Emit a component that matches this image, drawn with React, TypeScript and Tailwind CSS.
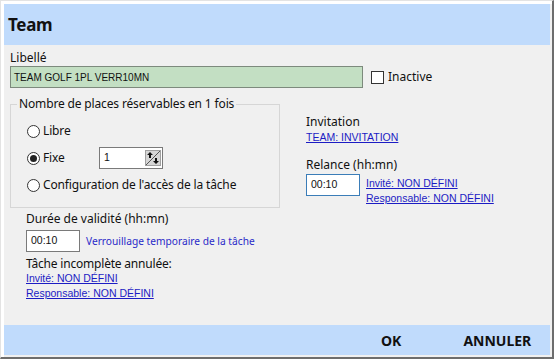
import React from 'react';

const segoe = { fontFamily: '"Noto Sans", "Open Sans", sans-serif' };
const tahoma = { fontFamily: '"Liberation Sans", Arial, sans-serif' };

function Radio({ checked, label }: { checked?: boolean; label: string }) {
  return (
    <div className="flex items-center h-[22px]">
      <span className="w-[13px] h-[13px] rounded-full border border-[#333] bg-white flex items-center justify-center">
        {checked && <span className="w-[7px] h-[7px] rounded-full bg-[#222]" />}
      </span>
      <span className="ml-[3px] text-[12px] leading-[16px] tracking-[-0.15px] text-[#111]">{label}</span>
    </div>
  );
}

function SpinArrows() {
  return (
    <svg width="16" height="16" viewBox="0 0 16 16" className="block">
      <rect x="0.5" y="0.5" width="15" height="15" fill="#d6d6d6" stroke="#a0a0a0" />
      <line x1="1" y1="15" x2="15" y2="1" stroke="#555" strokeWidth="1" />
      <path d="M5 2 L2 5 H4 V8 H6 V5 H8 Z" fill="#111" />
      <path d="M11 14 L14 11 H12 V8 H10 V11 H8 Z" fill="#111" />
    </svg>
  );
}

function Link({ children }: { children: React.ReactNode }) {
  return (
    <div style={tahoma} className="text-[10.5px] leading-[15px] text-[#1c1cc4] underline underline-offset-[1px]">
      {children}
    </div>
  );
}

function TimeBox({ value, accent }: { value: string; accent?: boolean }) {
  return (
    <div
      style={tahoma}
      className={`w-[54px] h-[22px] bg-white border ${accent ? 'border-[#3b7db8]' : 'border-[#7a7a7a]'} flex items-center pl-[4px] text-[10.5px] text-[#111]`}
    >
      {value}
    </div>
  );
}

export default function App() {
  return (
    <div
      style={segoe}
      className="w-[554px] h-[359px] bg-white border-t border-l border-[#e3e3e3] border-r-2 border-b-2 border-r-[#6d6d6d] border-b-[#6d6d6d] pt-[3px] pl-[3px]"
    >
      <div className="w-[548px] h-[353px] bg-[#f0f0f0] flex flex-col">
        <div className="w-[546px] h-[41px] bg-[#c0dbfc] flex items-center pl-[4px]">
          <span className="text-[17px] font-bold text-[#111] tracking-[-0.3px]">Team</span>
        </div>

        <div className="pl-[6px] text-[#111]">
          <div className="mt-[5px] text-[12px] leading-[16px]">Libellé</div>
          <div className="flex items-center h-[22px]">
            <div
              style={tahoma}
              className="w-[353px] h-[22px] bg-[#c3dfc3] border border-[#7d8a7d] flex items-center pl-[3px] text-[10px] text-[#111]"
            >
              TEAM GOLF 1PL VERR10MN
            </div>
            <span className="ml-[8px] w-[13px] h-[13px] border border-[#333] bg-white" />
            <span className="ml-[4px] text-[12px] leading-[16px]">Inactive</span>
          </div>

          <div className="flex">
            <fieldset className="mt-[8px] w-[270px] h-[112px] border border-[#d6d6d6] pl-[6px]">
              <legend className="px-[2px] text-[12px] leading-[16px] tracking-[-0.15px]">Nombre de places réservables en 1 fois</legend>
              <div className="pl-[10px] pt-[8px] flex flex-col gap-[5px]">
                <Radio label="Libre" />
                <div className="flex items-center">
                  <div className="w-[72px]">
                    <Radio checked label="Fixe" />
                  </div>
                  <div
                    style={tahoma}
                    className="w-[64px] h-[22px] bg-white border border-[#7a7a7a] flex items-center justify-between pl-[4px] pr-[1px] text-[10.5px]"
                  >
                    <span>1</span>
                    <SpinArrows />
                  </div>
                </div>
                <Radio label="Configuration de l'accès de la tâche" />
              </div>
            </fieldset>

            <div className="ml-[26px] pt-[26px] flex flex-col">
              <div className="text-[12px] leading-[16px]">Invitation</div>
              <Link>TEAM: INVITATION</Link>
              <div className="mt-[12px] text-[12px] leading-[16px]">Relance (hh:mn)</div>
              <div className="mt-[1px] flex">
                <TimeBox value="00:10" accent />
                <div className="ml-[6px] mt-[2px]">
                  <Link>Invité: NON DÉFINI</Link>
                  <Link>Responsable: NON DÉFINI</Link>
                </div>
              </div>
            </div>
          </div>

          <div className="pl-[16px]">
            <div className="mt-[3px] text-[12px] leading-[16px]">Durée de validité (hh:mn)</div>
            <div className="mt-[3px] flex items-center">
              <TimeBox value="00:10" />
              <span className="ml-[6px] text-[10.2px] leading-[16px] text-[#2a2ac8]">Verrouillage temporaire de la tâche</span>
            </div>
            <div className="mt-[4px] text-[12px] leading-[15px] tracking-[-0.2px]">Tâche incomplète annulée:</div>
            <Link>Invité: NON DÉFINI</Link>
            <Link>Responsable: NON DÉFINI</Link>
          </div>
        </div>

        <div className="mt-auto mb-[2px] w-[546px] h-[30px] bg-[#c0dbfc] flex items-center text-[14px] font-bold text-[#111]">
          <span className="ml-[377px]">OK</span>
          <span className="ml-[62px]">ANNULER</span>
        </div>
      </div>
    </div>
  );
}
